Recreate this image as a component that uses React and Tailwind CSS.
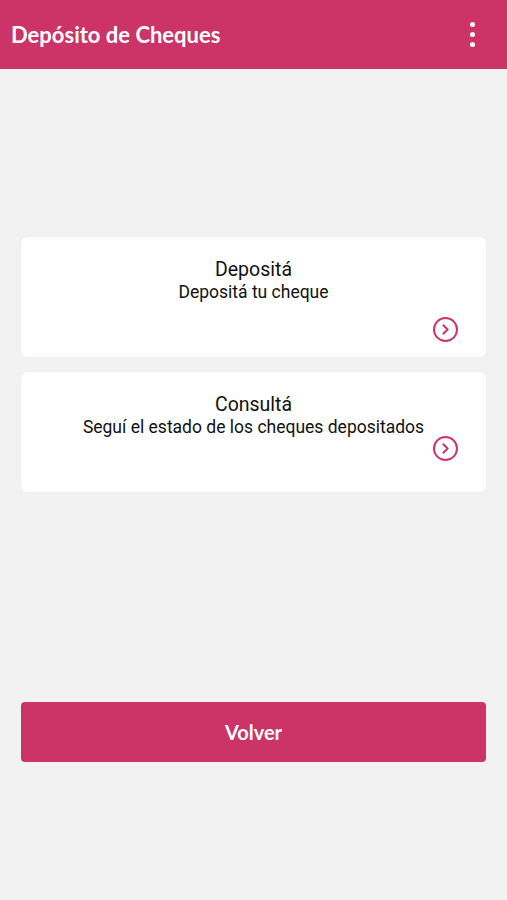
import { ChevronRight } from "lucide-react";

const options = [
	{ title: "Depositá", subtitle: "Depositá tu cheque", iconGap: "mt-[14px]" },
	{ title: "Consultá", subtitle: "Seguí el estado de los cheques depositados", iconGap: "-mt-[2px]" },
];

function OptionCard({ title, subtitle, iconGap }) {
	return (
		<div className="bg-white rounded-md h-[120px] px-4 pt-[21px] flex flex-col items-center shadow-[0_0_2px_rgba(0,0,0,0.06)]">
			<p className="text-[19.5px] leading-6 text-[#111] font-['Roboto',sans-serif]">{title}</p>
			<p className="text-[17.5px] leading-[22px] text-[#111] font-['Roboto',sans-serif] -mt-[1px]">{subtitle}</p>
			<div className={`self-end mr-[12px] ${iconGap}`}>
				<div className="w-[25px] h-[25px] rounded-full border-2 border-[#cc3366] flex items-center justify-center">
					<ChevronRight className="w-[17px] h-[17px] text-[#cc3366]" strokeWidth={2.75} />
				</div>
			</div>
		</div>
	);
}

export default function App() {
	return (
		<div className="min-h-[900px] bg-[#f2f2f2] flex flex-col font-['Lato',sans-serif]">
			{/* Toolbar */}
			<div className="h-[69px] bg-[#cc3366] flex items-center justify-between pl-[11px] pr-[32px]">
				<h1 className="text-white text-[22px] font-bold">Depósito de Cheques</h1>
				<div className="flex flex-col gap-[5px]">
					<span className="w-[5px] h-[5px] rounded-full bg-white" />
					<span className="w-[5px] h-[5px] rounded-full bg-white" />
					<span className="w-[5px] h-[5px] rounded-full bg-white" />
				</div>
			</div>

			{/* Options */}
			<div className="px-[21px] pt-[168px] flex flex-col gap-[15px]">
				{options.map((o) => (
					<OptionCard key={o.title} {...o} />
				))}
			</div>

			{/* Back button */}
			<div className="px-[21px] mt-[210px]">
				<button className="w-full h-[60px] rounded bg-[#cc3366] text-white text-[20px] font-bold">
					Volver
				</button>
			</div>
		</div>
	);
}
